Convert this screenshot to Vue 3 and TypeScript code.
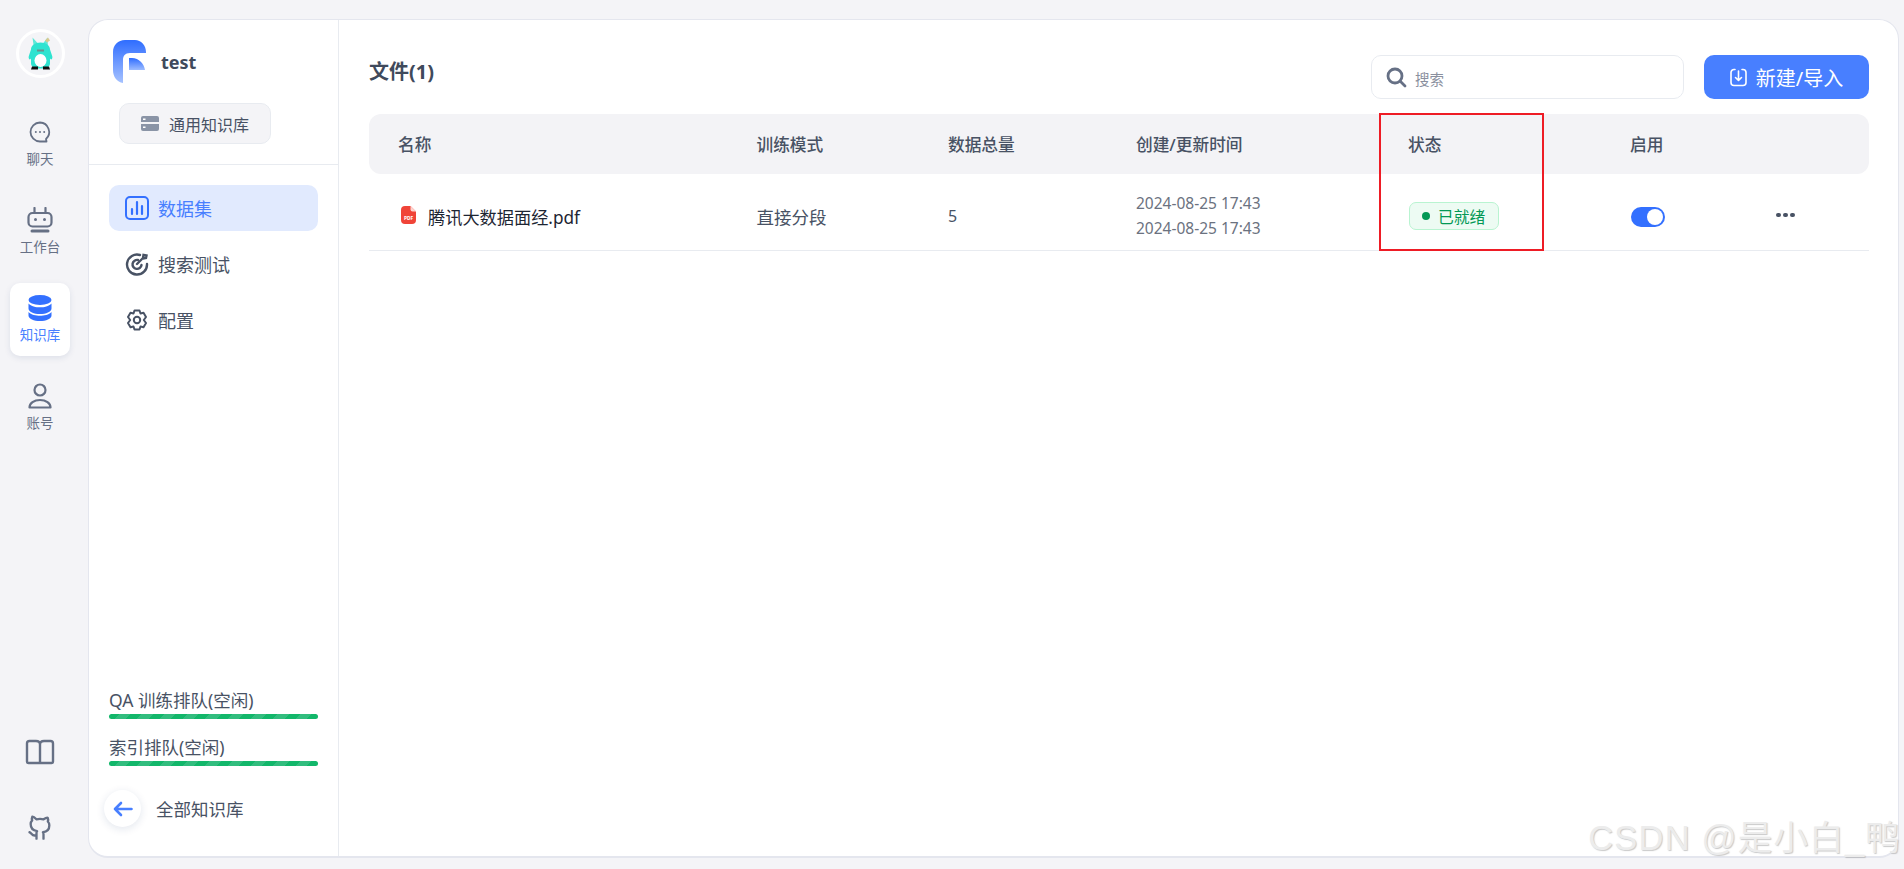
<script setup lang="ts">
interface RailItem { key: string; label: string; active?: boolean }
const rail: RailItem[] = [
  { key: 'chat', label: '聊天' },
  { key: 'robot', label: '工作台' },
  { key: 'db', label: '知识库', active: true },
  { key: 'user', label: '账号' },
]
const menu = [
  { key: 'stats', label: '数据集', active: true },
  { key: 'target', label: '搜索测试' },
  { key: 'gear', label: '配置' },
]
const queues = ['QA 训练排队(空闲)', '索引排队(空闲)']
const heads = ['名称', '训练模式', '数据总量', '创建/更新时间', '状态', '启用', '']
</script>

<template>
  <div class="page">
    <aside class="rail">
      <div class="avatar">
        <svg width="25" height="35" viewBox="0 0 25 34">
          <path d="M6 12 4.500 1 10 7h5l4.500-6L20 12z" fill="#5fe8d8" />
          <path d="M17 4l3-3 2 3-3 2z" fill="#d8c98f" />
          <path d="M3 13c0-4 4-7 9.500-7S22 9 22 13l2 6c1 2 0 4-1 4l-1-1v5c0 3-3 5-9.500 5S3 30 3 27v-5l-1 1c-1 0-2-2-1-4z" fill="#2fe3d0" />
          <ellipse cx="12.500" cy="24" rx="6" ry="6.500" fill="#fff" />
          <path d="M4 30h6v3H3zM15 30h6l1 3h-7z" fill="#111" />
          <path d="M9 13h7v2H9z" fill="#6d8f8c" />
        </svg>
      </div>
      <nav class="rail-nav">
        <div v-for="item in rail" :key="item.key" class="rail-item" :class="{ on: item.active }">
          <svg v-if="item.key === 'chat'" width="24" height="24" viewBox="0 0 24 24" fill="none" stroke="#667085" stroke-width="1.800">
            <path d="M12 2.500a9.500 9.500 0 1 0 0 19h6.500l-.5-2.500A9.500 9.500 0 0 0 12 2.500z" stroke-linejoin="round" />
            <circle cx="7.800" cy="12" r="1" fill="#667085" stroke="none" />
            <circle cx="12" cy="12" r="1" fill="#667085" stroke="none" />
            <circle cx="16.200" cy="12" r="1" fill="#667085" stroke="none" />
          </svg>
          <svg v-else-if="item.key === 'robot'" width="26" height="26" viewBox="0 0 26 26" fill="none" stroke="#667085" stroke-width="2.200">
            <path d="M7.500 1v5M18.500 1v5" stroke-linecap="round" />
            <rect x="1.500" y="6" width="23" height="13.500" rx="4" />
            <circle cx="8.500" cy="12.500" r="1.500" fill="#667085" stroke="none" />
            <circle cx="17.500" cy="12.500" r="1.500" fill="#667085" stroke="none" />
            <path d="M5 24h16" stroke-width="3" stroke-linecap="round" />
          </svg>
          <svg v-else-if="item.key === 'db'" width="24" height="26" viewBox="0 0 24 26" fill="#3370ff">
            <ellipse cx="12" cy="5" rx="11.500" ry="5" />
            <path d="M.5 8.500C3 11.500 8 12.300 12 12.300s9-.8 11.500-3.800v5C23.500 17 18 19 12 19S.5 17 .5 13.500z" />
            <path d="M.5 17C3 19.800 8 20.800 12 20.800s9-1 11.500-3.800v3.500C23.500 24 18 26 12 26S.5 24 .5 20.500z" />
          </svg>
          <svg v-else width="24" height="26" viewBox="0 0 24 26" fill="none" stroke="#667085" stroke-width="2.200">
            <circle cx="12" cy="7" r="5.500" />
            <path d="M1.500 24.500c0-4.500 4.500-7.500 10.500-7.500s10.500 3 10.500 7.500z" stroke-linejoin="round" />
          </svg>
          <span>{{ item.label }}</span>
        </div>
      </nav>
      <div class="rail-foot">
        <svg width="30" height="26" viewBox="0 0 30 26" fill="none" stroke="#667085" stroke-width="2.400" stroke-linejoin="round">
          <path d="M15 5.500C15 3 13 2 11 2H4.500C3 2 2 3 2 4.500v18C2 23.300 2.700 24 3.500 24H15zM15 5.500C15 3 17 2 19 2h6.500C27 2 28 3 28 4.500v18c0 .8-.7 1.500-1.500 1.500H15z" />
        </svg>
        <svg width="28" height="28" viewBox="0 0 24 24" fill="none" stroke="#667085" stroke-width="2" stroke-linecap="round" stroke-linejoin="round">
          <path d="M9 19c-4 1.500-4-2-6-2.500M15 22v-3.500c0-1 .1-1.500-.5-2 2.800-.3 5.500-1.400 5.500-6a4.600 4.600 0 0 0-1.300-3.200 4.200 4.200 0 0 0-.1-3.200s-1.100-.3-3.500 1.300a12.300 12.300 0 0 0-6.200 0C6.500 2.800 5.400 3.100 5.400 3.100a4.200 4.200 0 0 0-.1 3.200A4.600 4.600 0 0 0 4 9.500c0 4.600 2.700 5.700 5.500 6-.6.600-.6 1.200-.5 2V22" />
        </svg>
      </div>
    </aside>

    <section class="card">
      <aside class="panel">
        <header class="panel-head">
          <div class="brand">
            <svg width="33" height="43" viewBox="0 0 33 43">
              <defs>
                <linearGradient id="lg" x1="0" y1="0" x2="0" y2="1">
                  <stop offset="0" stop-color="#2f6dff" />
                  <stop offset="1" stop-color="#a6c2ff" />
                </linearGradient>
                <linearGradient id="lg2" x1="0" y1="0" x2="0" y2="1">
                  <stop offset="0" stop-color="#2f6dff" />
                  <stop offset="1" stop-color="#9dbcff" />
                </linearGradient>
              </defs>
              <path d="M12 0h10c6 0 11 5 11 12v1H17c-5 0-7 3-7 7v23C4 42 0 37 0 30V12C0 5 5 0 12 0z" fill="url(#lg)" />
              <path d="M16 18h3c7 0 12 6 13 12H16z" fill="url(#lg2)" />
            </svg>
            <strong>test</strong>
          </div>
          <div class="kind">
            <svg width="18" height="15" viewBox="0 0 18 15" fill="#8a94a6">
              <path d="M2 0h14a2 2 0 0 1 2 2v4H0V2a2 2 0 0 1 2-2zM0 8h18v5a2 2 0 0 1-2 2H2a2 2 0 0 1-2-2z" />
              <rect x="2" y="2.500" width="2.500" height="1.500" fill="#fff" />
              <rect x="2" y="10.500" width="2.500" height="1.500" fill="#fff" />
            </svg>
            <span>通用知识库</span>
          </div>
        </header>
        <nav class="menu">
          <div v-for="m in menu" :key="m.key" class="menu-item" :class="{ on: m.active }">
            <svg v-if="m.key === 'stats'" width="24" height="24" viewBox="0 0 24 24" fill="none" stroke="#3370ff" stroke-width="2">
              <rect x="1" y="1" width="22" height="22" rx="4" />
              <path d="M7 13v5M12 6v12M17 10v8" stroke-width="2.200" stroke-linecap="round" />
            </svg>
            <svg v-else-if="m.key === 'target'" width="24" height="24" viewBox="0 0 24 24" fill="none" stroke="#485264" stroke-width="2.400" stroke-linecap="round">
              <path d="M15 3a10 10 0 1 0 7 9" />
              <path d="M13 8a4.500 4.500 0 1 0 3.500 5" />
              <path d="M12 12l6-6M18 6l.5-3 3 .5-.5 2.500-3 .5z" />
            </svg>
            <svg v-else width="24" height="24" viewBox="0 0 24 24" fill="none" stroke="#485264" stroke-width="2" stroke-linejoin="round">
              <path d="M9.500 2.500h5l1 3 3-.8 2.500 4.300-2.200 3 2.200 3-2.500 4.300-3-.8-1 3h-5l-1-3-3 .8L3 15l2.200-3L3 9l2.500-4.300 3 .8z" />
              <circle cx="12" cy="12" r="3.200" />
            </svg>
            <span>{{ m.label }}</span>
          </div>
        </nav>
        <div class="queues">
          <div v-for="q in queues" :key="q" class="queue">
            <div class="queue-label">{{ q }}</div>
            <div class="queue-bar"></div>
          </div>
        </div>
        <div class="back">
          <div class="back-btn">
            <svg width="20" height="16" viewBox="0 0 20 16" fill="none" stroke="#487fff" stroke-width="2.600" stroke-linecap="round" stroke-linejoin="round">
              <path d="M18.500 8H2M8 2 2 8l6 6" />
            </svg>
          </div>
          <span>全部知识库</span>
        </div>
      </aside>

      <main class="main">
        <div class="toolbar">
          <h1>文件(1)</h1>
          <div class="tools">
            <div class="search">
              <svg width="21" height="21" viewBox="0 0 21 21" fill="none" stroke="#667085" stroke-width="2.800" stroke-linecap="round">
                <circle cx="9" cy="9" r="7" />
                <path d="M14.500 14.500 19 19" />
              </svg>
              <span>搜索</span>
            </div>
            <button class="primary" type="button">
              <svg width="17" height="19" viewBox="0 0 17 19" fill="none" stroke="#fff" stroke-width="1.600" stroke-linecap="round" stroke-linejoin="round">
                <path d="M5 1.500H4A3 3 0 0 0 1 4.500v10a3 3 0 0 0 3 3h9a3 3 0 0 0 3-3v-10a3 3 0 0 0-3-3h-1" />
                <path d="M8.500 3v9M5.500 9.500l3 3 3-3" />
              </svg>
              <span>新建/导入</span>
            </button>
          </div>
        </div>

        <div class="table-wrap">
          <div class="grid thead">
            <div v-for="(h, i) in heads" :key="i">{{ h }}</div>
          </div>
          <div class="grid trow">
            <div class="file">
              <svg width="15" height="18" viewBox="0 0 15 18">
                <path d="M4 0h5.500L15 5.500V14a4 4 0 0 1-4 4H4a4 4 0 0 1-4-4V4a4 4 0 0 1 4-4z" fill="#f04438" />
                <path d="M9.500 0 15 5.500h-3.500a2 2 0 0 1-2-2z" fill="#fdd5d0" />
                <text x="7.500" y="14.200" text-anchor="middle" font-size="4.800" font-weight="700" fill="#fff">PDF</text>
              </svg>
              <span>腾讯大数据面经.pdf</span>
            </div>
            <div class="cell">直接分段</div>
            <div class="cell">5</div>
            <div class="dates">
              <div>2024-08-25 17:43</div>
              <div>2024-08-25 17:43</div>
            </div>
            <div>
              <span class="tag"><i></i>已就绪</span>
            </div>
            <div>
              <span class="switch"><i></i></span>
            </div>
            <div class="more"><i></i><i></i><i></i></div>
          </div>
          <div class="mark"></div>
        </div>
      </main>
    </section>

    <div class="watermark">CSDN @是小白_鸭</div>
  </div>
</template>

<style>
html, body { margin: 0; background: #f4f4f7; }
</style>

<style scoped>
.page {
  position: relative;
  display: flex;
  width: 1904px;
  height: 869px;
  overflow: hidden;
  background: #f4f4f7;
  font-family: "Noto Sans", "Noto Sans CJK SC", sans-serif;
  color: #485264;
}
.rail {
  width: 88px;
  flex: none;
  display: flex;
  flex-direction: column;
  align-items: center;
  box-sizing: border-box;
  padding: 29px 0 28px;
}
.avatar {
  width: 49px;
  height: 49px;
  box-sizing: border-box;
  border: 3px solid #fff;
  border-radius: 50%;
  display: flex;
  align-items: center;
  justify-content: center;
  margin-left: -7px;
}
.rail-nav {
  margin-top: 29px;
  display: flex;
  flex-direction: column;
  gap: 15px;
}
.rail-item {
  width: 60px;
  height: 73px;
  margin-left: -8px;
  box-sizing: border-box;
  padding-top: 12px;
  border-radius: 10px;
  display: flex;
  flex-direction: column;
  align-items: center;
  justify-content: flex-start;
  font-size: 13.500px;
  line-height: 18px;
  color: #667085;
}
.rail-item svg { height: 26px; margin-bottom: 5px; }
.rail-item.on {
  background: #fff;
  color: #487fff;
  box-shadow: 0 2px 6px rgba(19, 51, 107, .1);
}
.rail-foot {
  margin-top: auto;
  margin-left: -8px;
  display: flex;
  flex-direction: column;
  align-items: center;
  gap: 48px;
}
.card {
  width: 1811px;
  height: 839px;
  margin-top: 19px;
  flex: none;
  box-sizing: border-box;
  display: flex;
  background: #fff;
  border: 1px solid #e4e6ee;
  border-bottom-width: 2px;
  border-radius: 20px;
  overflow: hidden;
}
.panel {
  width: 250px;
  flex: none;
  box-sizing: border-box;
  border-right: 1px solid #e8ebf0;
  display: flex;
  flex-direction: column;
}
.panel-head {
  padding: 20px 0 20px 24px;
  border-bottom: 1px solid #e8ebf0;
}
.brand {
  display: flex;
  align-items: center;
  gap: 15px;
  height: 43px;
}
.brand strong {
  font-size: 18px;
  font-weight: 700;
  color: #3f4a5c;
}
.kind {
  margin: 20px 0 0 6px;
  width: 152px;
  height: 41px;
  box-sizing: border-box;
  border: 1px solid #e8ebf0;
  border-radius: 10px;
  background: #f4f4f7;
  display: flex;
  align-items: center;
  gap: 10px;
  padding-left: 21px;
  font-size: 16px;
  color: #485264;
  white-space: nowrap;
}
.menu {
  padding: 20px 20px 0;
  display: flex;
  flex-direction: column;
  gap: 10px;
}
.menu-item {
  height: 46px;
  border-radius: 10px;
  display: flex;
  align-items: center;
  gap: 9px;
  padding-left: 16px;
  font-size: 18px;
  color: #485264;
}
.menu-item.on {
  background: #e1eafe;
  color: #487fff;
}
.queues {
  margin-top: auto;
  padding: 0 20px;
  display: flex;
  flex-direction: column;
  gap: 17px;
}
.queue-label {
  font-size: 17.500px;
  line-height: 24px;
  white-space: nowrap;
  margin-top: -1px;
  padding-bottom: 2px;
}
.queue-bar {
  height: 5px;
  border-radius: 3px;
  background: repeating-linear-gradient(-45deg, #12b76a 0 8px, #32bd7e 8px 16px);
}
.back {
  margin: 24px 0 29px 15px;
  display: flex;
  align-items: center;
  gap: 15px;
  font-size: 17.500px;
}
.back-btn {
  width: 37px;
  height: 37px;
  border-radius: 50%;
  background: #fff;
  box-shadow: 0 2px 8px rgba(19, 51, 107, .12);
  display: flex;
  align-items: center;
  justify-content: center;
}
.main {
  flex: 1;
  box-sizing: border-box;
  padding: 35px 29px 0 30px;
  min-width: 0;
}
.toolbar {
  display: flex;
  justify-content: space-between;
  height: 44px;
}
h1 {
  margin: 0;
  font-size: 20px;
  line-height: 34px;
  font-weight: 700;
  color: #3f4a5c;
}
.tools {
  display: flex;
  gap: 20px;
}
.search {
  width: 313px;
  height: 44px;
  box-sizing: border-box;
  border: 1px solid #e8ebf0;
  border-radius: 10px;
  display: flex;
  align-items: center;
  gap: 8px;
  padding-left: 14px;
  font-size: 14.500px;
  color: #8a8f9e;
}
.search span { margin-top: 2px; }
.primary {
  width: 165px;
  height: 44px;
  border: 0;
  border-radius: 10px;
  background: #487fff;
  color: #fff;
  display: flex;
  align-items: center;
  justify-content: center;
  gap: 9px;
  font-family: inherit;
  font-size: 20px;
  padding: 0;
}
.table-wrap {
  position: relative;
  margin-top: 15px;
}
.grid {
  display: grid;
  grid-template-columns: 358.500px 191.500px 188px 272px 222px 130px 1fr;
  padding-left: 29px;
  align-items: center;
}
.thead {
  height: 60px;
  border-radius: 12px;
  background: #f3f3f6;
  font-size: 16.700px;
  font-weight: 500;
  color: #485264;
}
.trow {
  margin-top: 8px;
  height: 69px;
  box-sizing: border-box;
  border-bottom: 1px solid #e8ebf0;
}
.file {
  display: flex;
  align-items: center;
  gap: 12px;
  padding-left: 3px;
  font-size: 17.200px;
  color: #1d2532;
}
.file svg { margin-top: -3px; }
.cell {
  font-size: 17.500px;
  color: #485264;
}
.cell + .cell { font-size: 16px; }
.dates {
  font-size: 15.500px;
  line-height: 25.500px;
  color: #6b7280;
}
.tag {
  box-sizing: border-box;
  display: inline-flex;
  align-items: center;
  gap: 8px;
  height: 28px;
  width: 90px;
  margin-left: 1px;
  padding-left: 12px;
  border: 1px solid #b9f4d1;
  border-radius: 7px;
  background: #edfbf3;
  color: #039855;
  font-size: 15.800px;
  white-space: nowrap;
}
.tag i {
  width: 8px;
  height: 8px;
  border-radius: 50%;
  background: #039855;
}
.switch {
  display: block;
  position: relative;
  width: 34px;
  height: 20px;
  margin: 1px 0 0 1px;
  border-radius: 10px;
  background: #3370ff;
}
.switch i {
  position: absolute;
  right: 2px;
  top: 2px;
  width: 16px;
  height: 16px;
  border-radius: 50%;
  background: #fff;
}
.more {
  display: flex;
  gap: 2.500px;
  padding-left: 16px;
  margin-top: -2px;
}
.more i {
  width: 4.500px;
  height: 4.500px;
  border-radius: 50%;
  background: #485264;
}
.mark {
  position: absolute;
  left: 1010px;
  top: -1px;
  width: 165px;
  height: 138px;
  box-sizing: border-box;
  border: 2px solid #ee1c25;
  pointer-events: none;
}
.watermark {
  position: absolute;
  right: 3px;
  bottom: 9px;
  font-family: "Liberation Sans", "Noto Sans CJK SC", sans-serif;
  font-size: 34.500px;
  line-height: 44px;
  letter-spacing: 1.200px;
  white-space: nowrap;
  color: #ececec;
  text-shadow: 1px 1px 1px rgba(150, 150, 150, .5);
}
</style>
